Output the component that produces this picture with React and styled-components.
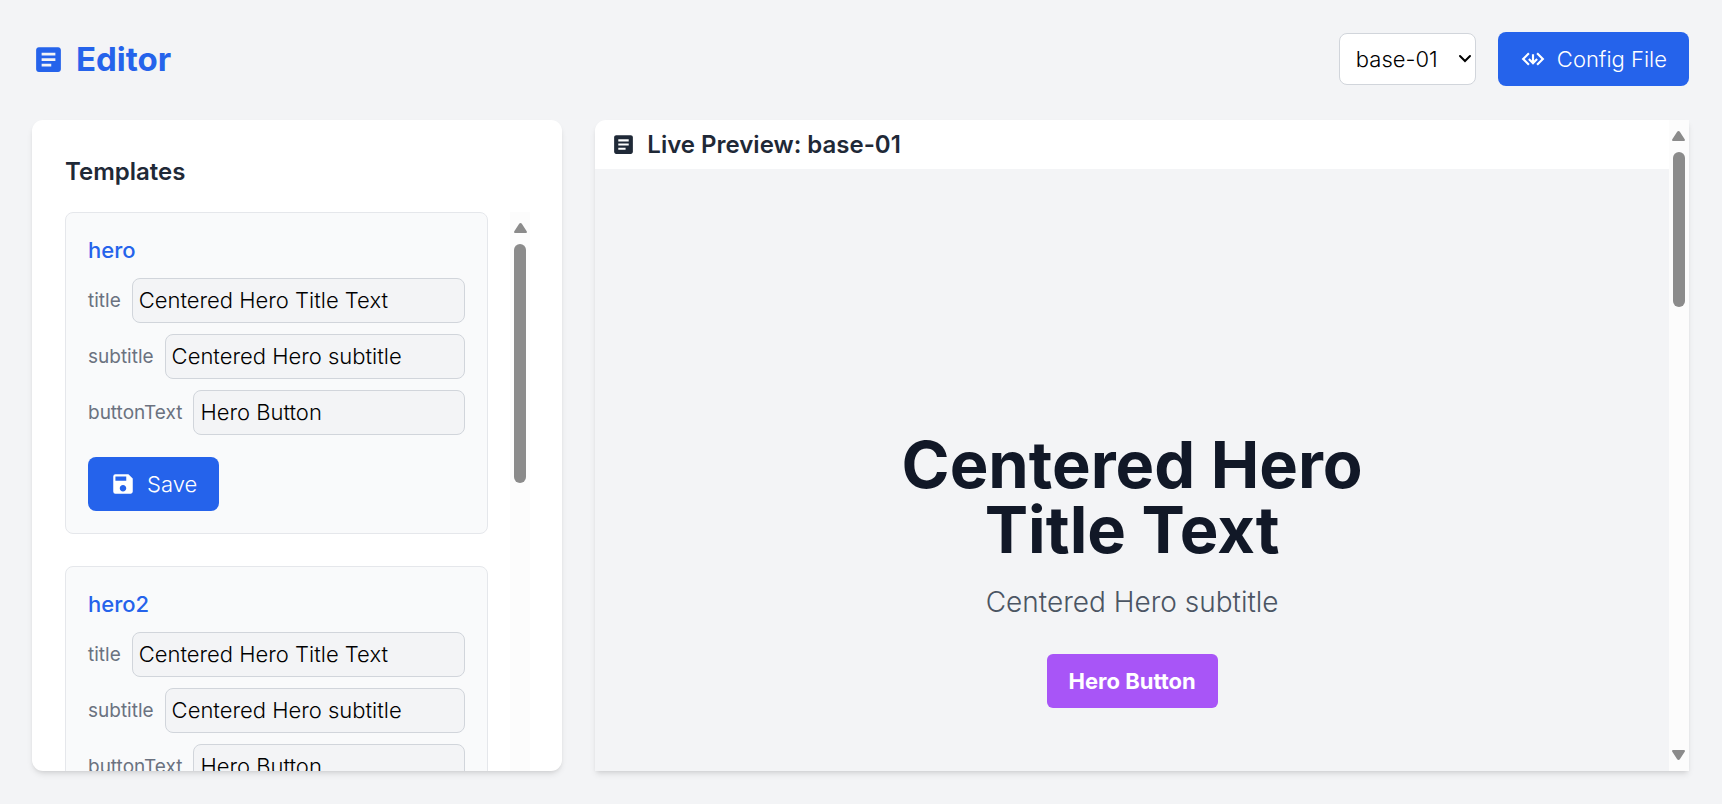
import React, { useId } from "react";
import styled, { createGlobalStyle } from "styled-components";
import { MdArticle, MdSave } from "react-icons/md";
import { IoMdCodeDownload } from "react-icons/io";

const GlobalStyle = createGlobalStyle`
  *, *::before, *::after { box-sizing: border-box; }
  body {
    margin: 0;
    background: #f3f4f6;
    color: #1f2937;
    font-family: Inter, "Liberation Sans", sans-serif;
    font-size: 22px;
    font-weight: 300;
    line-height: 32px;
  }
  h1, h2, h3, p { margin: 0; }
  button, input, select { font: inherit; }
  svg { flex: none; display: block; }
`;

const Page = styled.div`
  display: flex;
  flex-direction: column;
  gap: 34px;
  height: 100vh;
  padding: 32px 33px 33px 32px;
`;

const Header = styled.header`
  display: flex;
  align-items: center;
  justify-content: space-between;
`;

const Brand = styled.h1`
  display: flex;
  align-items: center;
  gap: 11px;
  color: #2563eb;
  font-size: 33px;
  font-weight: 700;
`;

const Actions = styled.div`
  display: flex;
  align-items: center;
  gap: 22px;
`;

const SelectBox = styled.div`
  position: relative;
`;

const SiteSelect = styled.select`
  display: block;
  width: 137px;
  height: 52px;
  padding: 0 16px;
  appearance: none;
  border: 1px solid #d1d5db;
  border-radius: 8px;
  background: #fff;
  color: #000;
`;

const Chevron = styled.svg`
  position: absolute;
  top: 21px;
  right: 4px;
  pointer-events: none;
`;

const PrimaryButton = styled.button`
  display: inline-flex;
  align-items: center;
  gap: 11px;
  padding: 11px 22px;
  border: 0;
  border-radius: 8px;
  background: #2563eb;
  color: #fff;
`;

const Main = styled.main`
  display: grid;
  grid-template-columns: minmax(0, 1fr) minmax(0, 1fr) minmax(0, 1fr);
  grid-template-rows: minmax(0, 1fr);
  gap: 33px;
  flex: 1;
  min-height: 0;
`;

const shadow = "0 4px 6px -1px rgba(0, 0, 0, 0.1), 0 2px 4px -2px rgba(0, 0, 0, 0.1)";

const TemplatesPanel = styled.section`
  display: flex;
  flex-direction: column;
  gap: 22px;
  padding: 33px 32px 0 33px;
  overflow: hidden;
  border-radius: 11px;
  background: #fff;
  box-shadow: ${shadow};
`;

const PanelTitle = styled.h2`
  font-size: 24px;
  line-height: 37px;
  font-weight: 600;
`;

const ScrollRow = styled.div`
  display: flex;
  gap: 22px;
  flex: 1;
  min-height: 0;
`;

const CardList = styled.div`
  display: flex;
  flex-direction: column;
  gap: 32px;
  flex: 1;
  min-width: 0;
  overflow: hidden;
`;

const Card = styled.form`
  display: flex;
  flex-direction: column;
  align-items: flex-start;
  flex: none;
  gap: 11px;
  padding: 22px;
  border: 1px solid #e5e7eb;
  border-radius: 8px;
  background: #f9fafb;
`;

const CardTitle = styled.h3`
  padding-bottom: 2px;
  color: #2563eb;
  font-size: 22px;
  line-height: 30px;
  font-weight: 500;
`;

const FieldRow = styled.div`
  display: flex;
  align-items: center;
  align-self: stretch;
  gap: 11px;
`;

const FieldLabel = styled.label`
  color: #6b7280;
  font-size: 19px;
  font-weight: 400;
`;

const FieldInput = styled.input`
  flex: 1;
  min-width: 0;
  height: 45px;
  padding: 0 6px 2px;
  border: 1px solid #d1d5db;
  border-radius: 8px;
  background: #f3f4f6;
  color: #000;
`;

const SaveButton = styled(PrimaryButton)`
  margin-top: 11px;
`;

const Track = styled.div`
  display: flex;
  flex-direction: column;
  align-items: center;
  flex: none;
  width: 20px;
  padding: 11px 0;
  background: #fcfcfc;
  color: #8b8b8b;
`;

const Thumb = styled.div`
  width: 12px;
  height: ${({ $length }) => $length}px;
  margin: 11px 0 auto;
  border-radius: 6px;
  background: #8b8b8b;
`;

const PreviewPanel = styled.section`
  display: flex;
  grid-column: span 2;
  overflow: hidden;
  border-radius: 11px 0 0 0;
  background: #f3f4f6;
  box-shadow: ${shadow};
`;

const PreviewContent = styled.div`
  display: flex;
  flex-direction: column;
  flex: 1;
  min-width: 0;
`;

const PreviewHeader = styled.div`
  display: flex;
  align-items: center;
  gap: 11px;
  padding: 6px 16px;
  background: #fff;
`;

const Hero = styled.div`
  display: flex;
  flex-direction: column;
  align-items: center;
  justify-content: flex-end;
  flex: 1;
  padding-bottom: 63px;
  text-align: center;
`;

const HeroTitle = styled.p`
  max-width: 528px;
  color: #111827;
  font-size: 65px;
  line-height: 65px;
  font-weight: 700;
`;

const HeroSubtitle = styled.p`
  padding: 22px 0 33px;
  color: #4b5563;
  font-size: 28px;
  line-height: 37px;
`;

const HeroButton = styled.button`
  padding: 11px 22px;
  border: 0;
  border-radius: 6px;
  background: #a855f7;
  color: #fff;
  font-weight: 700;
`;

const templates = [
  { name: "hero", fields: { title: "Centered Hero Title Text", subtitle: "Centered Hero subtitle", buttonText: "Hero Button" } },
  { name: "hero2", fields: { title: "Centered Hero Title Text", subtitle: "Centered Hero subtitle", buttonText: "Hero Button" } },
];

function Arrow({ down }) {
  return (
    <svg width="13" height="10" viewBox="0 0 13 10" aria-hidden="true">
      <path
        fill="currentColor"
        d={down
          ? "M1 0h11c1 0 1.200 1 .7 1.700L8 9c-.8 1.200-2.200 1.200-3 0L.3 1.700C-.2 1 0 0 1 0z"
          : "M1 10h11c1 0 1.200-1 .7-1.700L8 1C7.200-.2 5.800-.2 5 1L.3 8.300C-.2 9 0 10 1 10z"}
      />
    </svg>
  );
}

function Scrollbar({ length, endArrow }) {
  return (
    <Track aria-hidden="true">
      <Arrow />
      <Thumb $length={length} />
      {endArrow && <Arrow down />}
    </Track>
  );
}

function Field({ name, value }) {
  const id = useId();
  return (
    <FieldRow>
      <FieldLabel htmlFor={id}>{name}</FieldLabel>
      <FieldInput id={id} type="text" defaultValue={value} />
    </FieldRow>
  );
}

function TemplateCard({ name, fields }) {
  return (
    <Card onSubmit={(event) => event.preventDefault()}>
      <CardTitle>{name}</CardTitle>
      {Object.entries(fields).map(([key, value]) => (
        <Field key={key} name={key} value={value} />
      ))}
      <SaveButton type="submit">
        <MdSave size={26} />
        Save
      </SaveButton>
    </Card>
  );
}

export default function App() {
  return (
    <>
      <GlobalStyle />
      <Page>
        <Header>
          <Brand>
            <MdArticle size={33} />
            Editor
          </Brand>
          <Actions>
            <SelectBox>
              <SiteSelect aria-label="Site" defaultValue="base-01">
                <option>base-01</option>
              </SiteSelect>
              <Chevron width="14" height="10" viewBox="0 0 14 10" aria-hidden="true">
                <path d="M2 2l5 5 5-5" fill="none" stroke="#000" strokeWidth="2" strokeLinecap="round" />
              </Chevron>
            </SelectBox>
            <PrimaryButton type="button">
              <IoMdCodeDownload size={26} />
              Config File
            </PrimaryButton>
          </Actions>
        </Header>
        <Main>
          <TemplatesPanel>
            <PanelTitle>Templates</PanelTitle>
            <ScrollRow>
              <CardList>
                {templates.map((template) => (
                  <TemplateCard key={template.name} {...template} />
                ))}
              </CardList>
              <Scrollbar length={239} />
            </ScrollRow>
          </TemplatesPanel>
          <PreviewPanel>
            <PreviewContent>
              <PreviewHeader>
                <MdArticle size={25} />
                <PanelTitle>Live Preview: base-01</PanelTitle>
              </PreviewHeader>
              <Hero>
                <HeroTitle>Centered Hero Title Text</HeroTitle>
                <HeroSubtitle>Centered Hero subtitle</HeroSubtitle>
                <HeroButton type="button">Hero Button</HeroButton>
              </Hero>
            </PreviewContent>
            <Scrollbar length={155} endArrow />
          </PreviewPanel>
        </Main>
      </Page>
    </>
  );
}
